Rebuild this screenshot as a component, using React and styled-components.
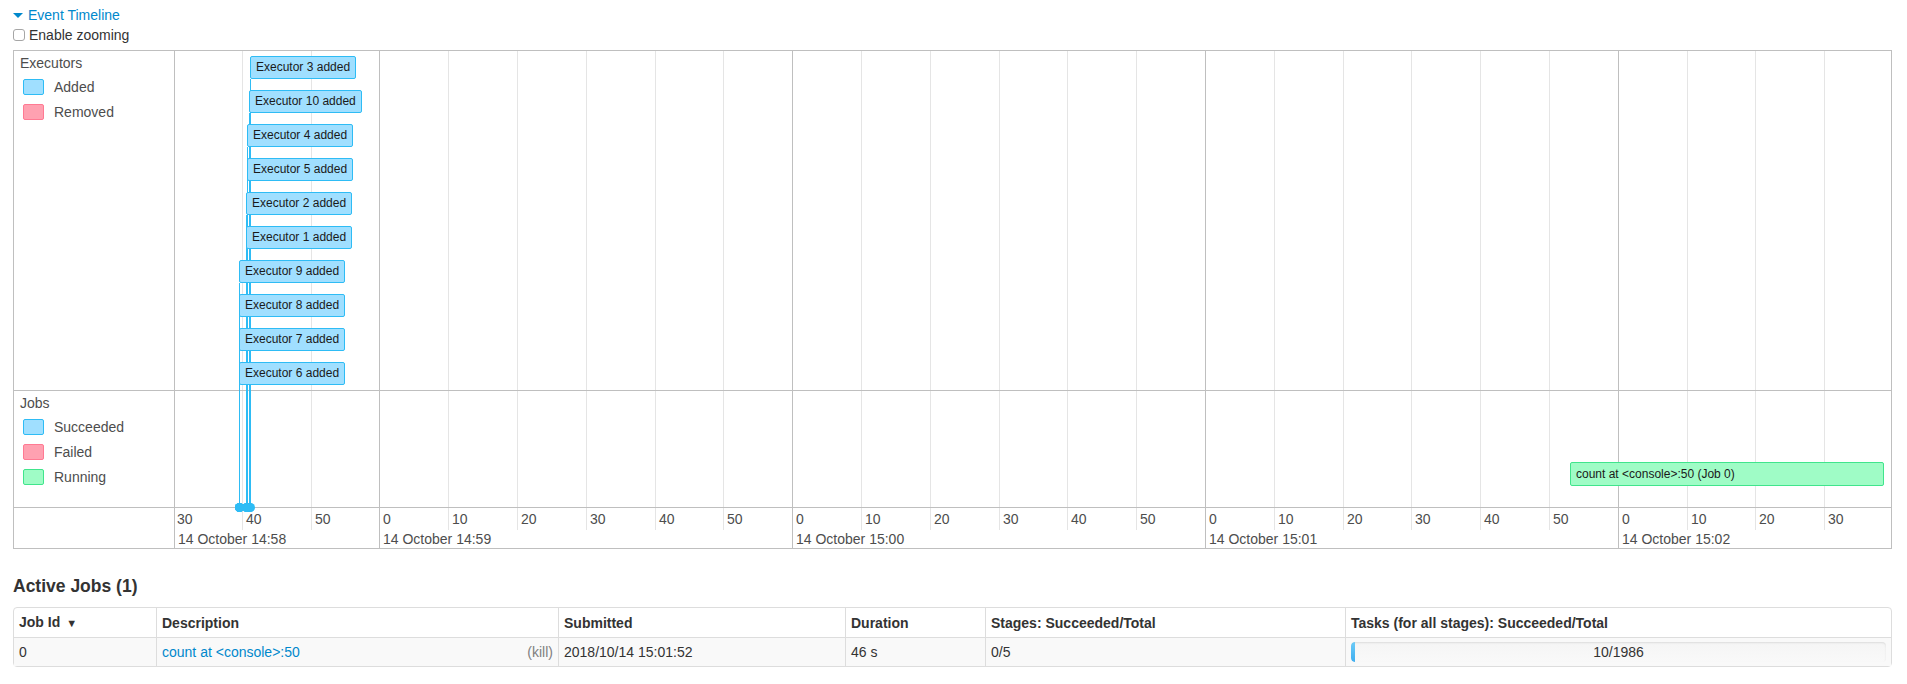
import React from 'react';
import styled, { createGlobalStyle } from 'styled-components';

const GlobalStyle = createGlobalStyle`
  html, body {
    margin: 0;
    padding: 0;
    background: #fff;
  }
  body {
    font-family: "Liberation Sans", Helvetica, Arial, sans-serif;
    font-size: 14px;
    line-height: 20px;
    color: #333;
  }
`;

// time scale: seconds relative to 14:59:00 -> px inside the timeline canvas
const PX_PER_SEC = 6.88;
const ORIGIN = 204.3;
const tx = (sec) => ORIGIN + sec * PX_PER_SEC;

const AXIS_Y = 456;

const colors = {
  blueBg: '#a0dfff',
  blueBorder: '#2ebcf5',
  redBg: '#ffa1b1',
  redBorder: '#ff7a93',
  greenBg: '#9ffcc6',
  greenBorder: '#40e58c',
};

const executors = [
  { id: 3, sec: -18.8 },
  { id: 10, sec: -18.95 },
  { id: 4, sec: -19.25 },
  { id: 5, sec: -19.25 },
  { id: 2, sec: -19.4 },
  { id: 1, sec: -19.4 },
  { id: 9, sec: -20.4 },
  { id: 8, sec: -20.4 },
  { id: 7, sec: -20.4 },
  { id: 6, sec: -20.4 },
];

const minorTicks = [];
for (let s = -30; s <= 210; s += 10) minorTicks.push(s);
const majorTicks = [
  { sec: 0, label: '14 October 14:59' },
  { sec: 60, label: '14 October 15:00' },
  { sec: 120, label: '14 October 15:01' },
  { sec: 180, label: '14 October 15:02' },
];

const Page = styled.div`
  width: 1879px;
  padding: 5px 0 20px 13px;
`;

const ToggleLink = styled.a`
  display: flex;
  align-items: center;
  height: 20px;
  width: max-content;
  color: #0088cc;
  cursor: pointer;
`;

const Caret = styled.span`
  width: 0;
  height: 0;
  border-left: 5px solid transparent;
  border-right: 5px solid transparent;
  border-top: 5px solid #0088cc;
  margin-right: 5px;
`;

const ZoomRow = styled.label`
  display: flex;
  align-items: center;
  height: 20px;
  width: max-content;
`;

const CheckBox = styled.input`
  appearance: none;
  width: 12px;
  height: 12px;
  margin: 0 4px 0 0;
  border: 1px solid #a6a6a6;
  border-radius: 3px;
  background: #fff;
`;

const TimelineBox = styled.div`
  margin-top: 5px;
  display: grid;
  grid-template-columns: 161px 1fr;
  grid-template-rows: 340px 117px 40px;
  border: 1px solid #bfbfbf;
  color: #4d4d4d;
`;

const LabelCell = styled.div`
  grid-column: 1;
  box-sizing: border-box;
  border-right: 1px solid #bfbfbf;
  border-bottom: ${({ $last }) => ($last ? 'none' : '1px solid #bfbfbf')};
  padding: 2px 0 0 6px;
`;

const GroupTitle = styled.div`
  height: 20px;
  line-height: 20px;
`;

const Legend = styled.div`
  display: flex;
  flex-direction: column;
  margin-top: ${({ $offset }) => $offset}px;
  padding-left: 3px;
`;

const LegendRow = styled.div`
  display: flex;
  align-items: center;
  height: 25px;
`;

const Swatch = styled.span`
  box-sizing: border-box;
  width: 21px;
  height: 16px;
  border-radius: 2px;
  border: 1px solid ${({ $border }) => $border};
  background: ${({ $bg }) => $bg};
  margin-right: 10px;
`;

const GroupRow = styled.div`
  grid-column: 2;
  grid-row: ${({ $row }) => $row};
  box-sizing: border-box;
  border-bottom: 1px solid #bfbfbf;
  position: relative;
  z-index: 1;
`;

const Canvas = styled.div`
  grid-column: 2;
  grid-row: 1 / 4;
  position: relative;
  overflow: hidden;
  z-index: ${({ $z }) => $z};
`;

const GridLine = styled.div`
  position: absolute;
  top: 0;
  width: 1px;
  height: ${({ $major }) => ($major ? '100%' : '479px')};
  background: ${({ $major }) => ($major ? '#bfbfbf' : '#e5e5e5')};
`;

const MinorLabel = styled.div`
  position: absolute;
  top: ${AXIS_Y + 1}px;
  height: 22px;
  line-height: 22px;
  white-space: nowrap;
`;

const MajorLabel = styled.div`
  position: absolute;
  top: ${AXIS_Y + 23}px;
  height: 18px;
  line-height: 18px;
  white-space: nowrap;
`;

const ItemLine = styled.div`
  position: absolute;
  width: 1px;
  background: ${colors.blueBorder};
`;

const ItemDot = styled.div`
  position: absolute;
  top: ${AXIS_Y - 4}px;
  width: 9px;
  height: 9px;
  margin-left: -4px;
  border-radius: 50%;
  background: ${colors.blueBorder};
`;

const ItemBox = styled.div`
  position: absolute;
  box-sizing: border-box;
  height: ${({ $h }) => $h}px;
  line-height: ${({ $h }) => $h - 2}px;
  padding: 0 5px;
  font-size: 12px;
  color: #1a1a1a;
  white-space: nowrap;
  border: 1px solid ${({ $border }) => $border};
  background: ${({ $bg }) => $bg};
  border-radius: 2px;
`;

const SectionTitle = styled.h4`
  margin: 27px 0 11px;
  font-size: 17.5px;
  line-height: 20px;
  font-weight: bold;
  color: #333;
`;

const JobsTable = styled.table`
  width: 100%;
  table-layout: fixed;
  border-collapse: separate;
  border-spacing: 0;
  border: 1px solid #ddd;
  border-radius: 4px;
`;

const Th = styled.th`
  text-align: left;
  font-weight: bold;
  padding: 4px 5px;
  line-height: 20px;
  border-left: ${({ $first }) => ($first ? 'none' : '1px solid #ddd')};
  white-space: nowrap;
`;

const Td = styled.td`
  padding: 4px 5px;
  line-height: 20px;
  background: #f9f9f9;
  border-top: 1px solid #ddd;
  border-left: ${({ $first }) => ($first ? 'none' : '1px solid #ddd')};
  vertical-align: middle;
  white-space: nowrap;
`;

const SortArrow = styled.span`
  font-size: 11px;
  margin-left: 6px;
`;

const DescriptionCell = styled.div`
  display: flex;
  justify-content: space-between;
`;

const JobLink = styled.a`
  color: #0088cc;
  cursor: pointer;
`;

const KillLink = styled.a`
  color: #808080;
  cursor: pointer;
`;

const Progress = styled.div`
  position: relative;
  height: 20px;
  border-radius: 4px;
  overflow: hidden;
  background: linear-gradient(to bottom, #f5f5f5, #f9f9f9);
  box-shadow: inset 0 1px 2px rgba(0, 0, 0, 0.1);
`;

const ProgressBar = styled.div`
  height: 100%;
  min-width: 4px;
  border-radius: 4px 0 0 4px;
  background: linear-gradient(to bottom, #6ccbf7, #3eaef0);
`;

const ProgressText = styled.span`
  position: absolute;
  inset: 0;
  text-align: center;
  line-height: 20px;
  font-size: 14px;
  color: #333;
`;

function LegendItem({ bg, border, label }) {
  return (
    <LegendRow>
      <Swatch $bg={bg} $border={border} />
      <span>{label}</span>
    </LegendRow>
  );
}

function EventTimeline() {
  return (
    <TimelineBox>
      <LabelCell style={{ gridRow: 1 }}>
        <GroupTitle>Executors</GroupTitle>
        <Legend $offset={1}>
          <LegendItem bg={colors.blueBg} border={colors.blueBorder} label="Added" />
          <LegendItem bg={colors.redBg} border={colors.redBorder} label="Removed" />
        </Legend>
      </LabelCell>
      <LabelCell style={{ gridRow: 2 }}>
        <GroupTitle>Jobs</GroupTitle>
        <Legend $offset={1}>
          <LegendItem bg={colors.blueBg} border={colors.blueBorder} label="Succeeded" />
          <LegendItem bg={colors.redBg} border={colors.redBorder} label="Failed" />
          <LegendItem bg={colors.greenBg} border={colors.greenBorder} label="Running" />
        </Legend>
      </LabelCell>
      <LabelCell $last style={{ gridRow: 3 }} />

      <Canvas $z={0}>
        {minorTicks.map((s) => {
          const x = tx(s);
          if (x < 0) return null;
          return <GridLine key={s} $major={s % 60 === 0} style={{ left: Math.round(x) }} />;
        })}
        {minorTicks.map((s) => (
          <MinorLabel key={s} style={{ left: Math.round(tx(s)) + 4 }}>
            {((s % 60) + 60) % 60}
          </MinorLabel>
        ))}
        <MajorLabel style={{ left: 3 }}>14 October 14:58</MajorLabel>
        {majorTicks.map((m) => (
          <MajorLabel key={m.sec} style={{ left: Math.round(tx(m.sec)) + 4 }}>
            {m.label}
          </MajorLabel>
        ))}
      </Canvas>

      <GroupRow $row={1} />
      <GroupRow $row={2} />

      <Canvas $z={2}>
        {executors.map((e, i) => {
          const x = Math.round(tx(e.sec));
          const top = 5 + 34 * i + 23;
          return <ItemLine key={e.id} style={{ left: x, top, height: AXIS_Y - top }} />;
        })}
        {executors.map((e) => (
          <ItemDot key={e.id} style={{ left: Math.round(tx(e.sec)) }} />
        ))}
        {executors.map((e, i) => (
          <ItemBox
            key={e.id}
            $h={23}
            $bg={colors.blueBg}
            $border={colors.blueBorder}
            style={{ left: Math.round(tx(e.sec)), top: 5 + 34 * i }}
          >
            Executor {e.id} added
          </ItemBox>
        ))}
        <ItemBox
          $h={24}
          $bg={colors.greenBg}
          $border={colors.greenBorder}
          style={{ left: Math.round(tx(173)), top: 411, width: 314 }}
        >
          count at &lt;console&gt;:50 (Job 0)
        </ItemBox>
      </Canvas>
    </TimelineBox>
  );
}

function ActiveJobs() {
  const done = 10;
  const total = 1986;
  return (
    <>
      <SectionTitle>Active Jobs (1)</SectionTitle>
      <JobsTable>
        <colgroup>
          <col style={{ width: 142 }} />
          <col style={{ width: 402 }} />
          <col style={{ width: 287 }} />
          <col style={{ width: 140 }} />
          <col style={{ width: 360 }} />
          <col />
        </colgroup>
        <thead>
          <tr>
            <Th $first>
              Job Id<SortArrow>▼</SortArrow>
            </Th>
            <Th>Description</Th>
            <Th>Submitted</Th>
            <Th>Duration</Th>
            <Th>Stages: Succeeded/Total</Th>
            <Th>Tasks (for all stages): Succeeded/Total</Th>
          </tr>
        </thead>
        <tbody>
          <tr>
            <Td $first>0</Td>
            <Td>
              <DescriptionCell>
                <JobLink>count at &lt;console&gt;:50</JobLink>
                <KillLink>(kill)</KillLink>
              </DescriptionCell>
            </Td>
            <Td>2018/10/14 15:01:52</Td>
            <Td>46 s</Td>
            <Td>0/5</Td>
            <Td>
              <Progress>
                <ProgressBar style={{ width: `${(done / total) * 100}%` }} />
                <ProgressText>
                  {done}/{total}
                </ProgressText>
              </Progress>
            </Td>
          </tr>
        </tbody>
      </JobsTable>
    </>
  );
}

export default function App() {
  return (
    <Page>
      <GlobalStyle />
      <ToggleLink>
        <Caret />
        Event Timeline
      </ToggleLink>
      <ZoomRow>
        <CheckBox type="checkbox" />
        Enable zooming
      </ZoomRow>
      <EventTimeline />
      <ActiveJobs />
    </Page>
  );
}
